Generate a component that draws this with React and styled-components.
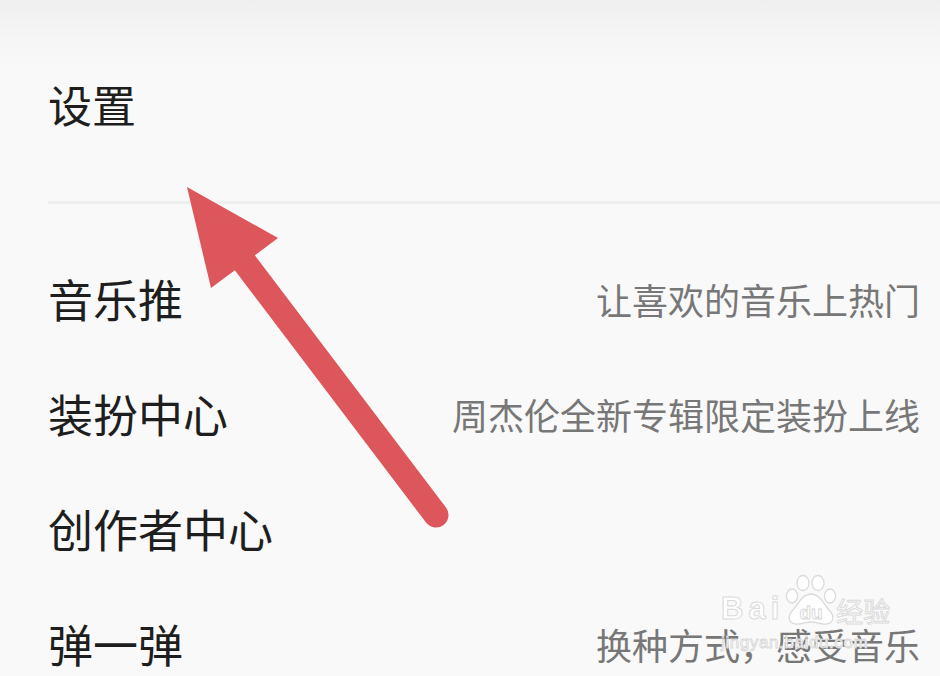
import React from "react";
import styled, { createGlobalStyle } from "styled-components";

const Global = createGlobalStyle`
  html, body { margin: 0; padding: 0; background: #f9f9f9; }
  body { font-family: "Noto Sans CJK SC", "Noto Sans", sans-serif; }
`;

const Page = styled.div`
  position: relative;
  width: 940px;
  height: 676px;
  overflow: hidden;
  background: linear-gradient(to bottom, #efefef 0px, #f6f6f6 40px, #f9f9f9 70px, #f9f9f9 100%);
`;

const Header = styled.div`
  height: 201px;
  display: flex;
  align-items: center;
  padding: 6px 48px 0;
  box-sizing: border-box;
`;

const Title = styled.h1`
  margin: 0;
  font-size: 44px;
  font-weight: 400;
  line-height: 1;
  color: #1e1e1e;
`;

const Divider = styled.div`
  margin-left: 48px;
  height: 3px;
  background: #efefef;
`;

const List = styled.div`
  padding-top: 37px;
`;

const Row = styled.div`
  height: 115px;
  display: flex;
  align-items: center;
  justify-content: space-between;
  padding: 0 20px 0 48px;
  box-sizing: border-box;
`;

const Label = styled.span`
  font-size: 45px;
  line-height: 1;
  color: #1e1e1e;
`;

const Hint = styled.span`
  font-size: 36px;
  line-height: 1;
  color: #777777;
`;

const ArrowSvg = styled.svg`
  position: absolute;
  left: 0;
  top: 0;
  pointer-events: none;
`;

const Watermark = styled.div`
  position: absolute;
  left: 721px;
  top: 574px;
  display: flex;
  flex-direction: column;
  gap: 8px;
  pointer-events: none;
`;

const WmTop = styled.div`
  display: flex;
  align-items: flex-end;
`;

const WmBai = styled.span`
  font-family: "Liberation Sans", Arial, sans-serif;
  font-size: 31px;
  font-weight: 700;
  line-height: 1;
  color: #ffffff;
  -webkit-text-stroke: 1px #dadada;
  letter-spacing: 5px;
  margin-bottom: 2px;
`;

const WmJy = styled.span`
  font-size: 27px;
  line-height: 1;
  color: #ffffff;
  -webkit-text-stroke: 1px #dadada;
  margin-bottom: 2px;
  margin-left: -2px;
`;

const WmUrl = styled.span`
  font-family: "Liberation Sans", Arial, sans-serif;
  font-size: 17px;
  line-height: 1;
  color: #ffffff;
  -webkit-text-stroke: 0.8px #d6d6d6;
  letter-spacing: 0.6px;
`;

const rows = [
  { label: "音乐推", hint: "让喜欢的音乐上热门" },
  { label: "装扮中心", hint: "周杰伦全新专辑限定装扮上线" },
  { label: "创作者中心", hint: "" },
  { label: "弹一弹", hint: "换种方式，感受音乐" },
];

export default function App() {
  return (
    <>
      <Global />
      <Page>
        <Header>
          <Title>设置</Title>
        </Header>
        <Divider />
        <List>
          {rows.map((r) => (
            <Row key={r.label}>
              <Label>{r.label}</Label>
              {r.hint && <Hint>{r.hint}</Hint>}
            </Row>
          ))}
        </List>

        <Watermark>
          <WmTop>
            <WmBai>Bai</WmBai>
            <svg width="54" height="52" viewBox="0 0 54 52">
              <g fill="#ffffff" stroke="#dadada" strokeWidth="1.3">
                <ellipse cx="8" cy="22" rx="5.5" ry="7" />
                <ellipse cx="19" cy="9" rx="6" ry="7.5" />
                <ellipse cx="34" cy="9" rx="6" ry="7.5" />
                <ellipse cx="46" cy="22" rx="5.5" ry="7" />
                <path d="M27 20 C18 20 14 31 8 37 C2 44 6 51 15 50 C21 49 23 48 27 48 C31 48 33 49 39 50 C48 51 52 44 46 37 C40 31 36 20 27 20 Z" />
              </g>
              <text x="27" y="45" textAnchor="middle" fontFamily="Liberation Sans, Arial, sans-serif" fontWeight="700" fontSize="19" fill="#ffffff" stroke="#d6d6d6" strokeWidth="0.9">du</text>
            </svg>
            <WmJy>经验</WmJy>
          </WmTop>
          <WmUrl>jingyan.baidu.com</WmUrl>
        </Watermark>

        <ArrowSvg width="940" height="676" viewBox="0 0 940 676">
          <line x1="245" y1="263" x2="436" y2="515" stroke="#dc565c" strokeWidth="25" strokeLinecap="round" />
          <polygon points="187,187 278,238 211,288" fill="#dc565c" />
        </ArrowSvg>
      </Page>
    </>
  );
}
